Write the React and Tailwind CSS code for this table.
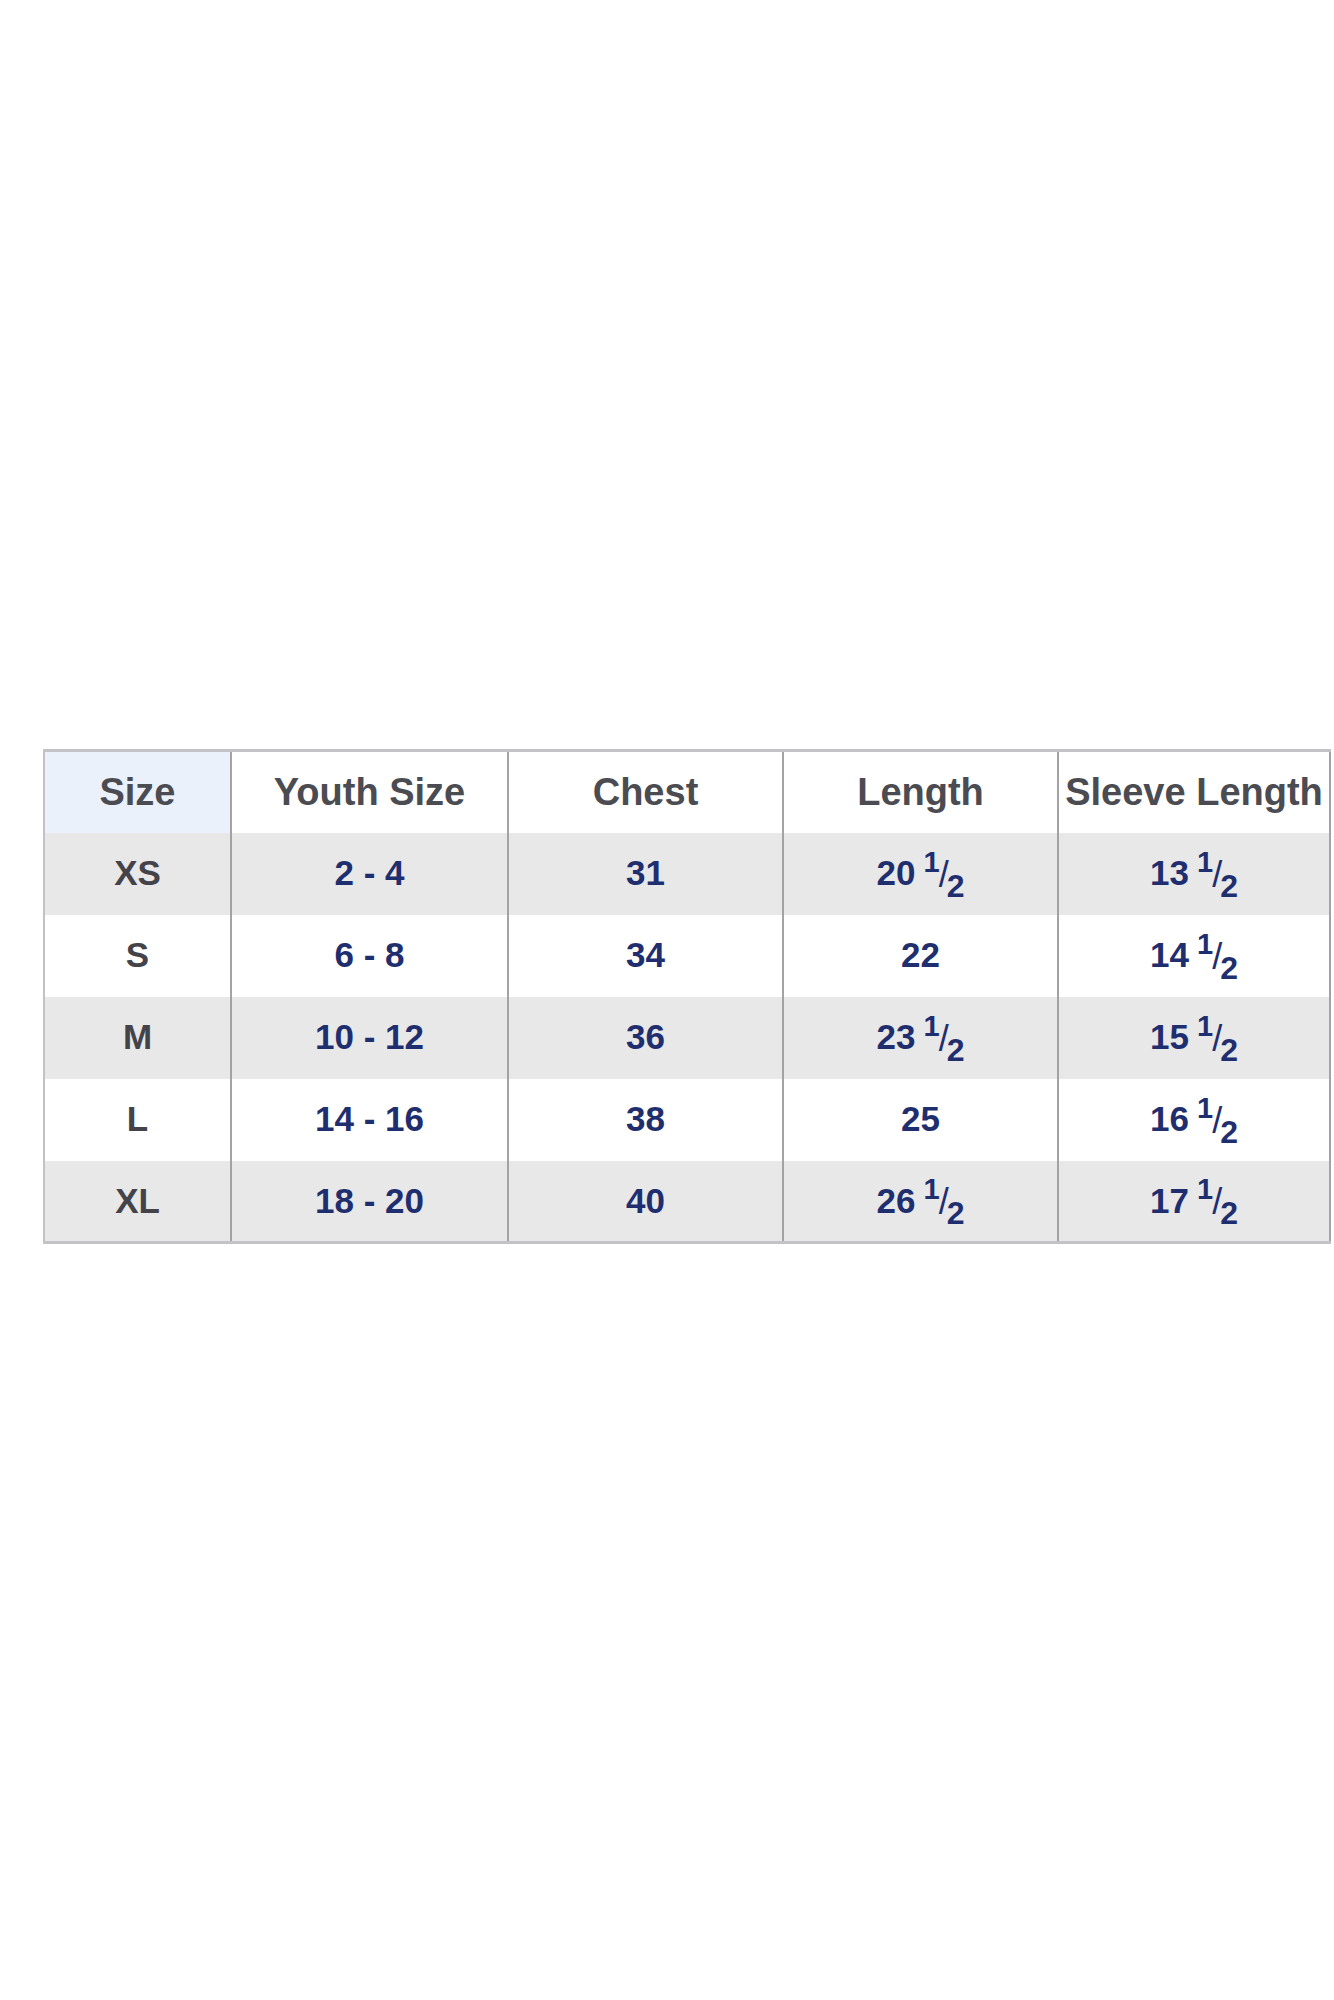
const rows = [
  { size: "XS", youth: "2 - 4", chest: "31", length: ["20", true], sleeve: ["13", true] },
  { size: "S", youth: "6 - 8", chest: "34", length: ["22", false], sleeve: ["14", true] },
  { size: "M", youth: "10 - 12", chest: "36", length: ["23", true], sleeve: ["15", true] },
  { size: "L", youth: "14 - 16", chest: "38", length: ["25", false], sleeve: ["16", true] },
  { size: "XL", youth: "18 - 20", chest: "40", length: ["26", true], sleeve: ["17", true] },
];

function Half({ whole, half }) {
  return (
    <span className="inline-flex items-center justify-center">
      <span>{whole}</span>
      {half && (
        <span className="ml-[8px] inline-flex items-center">
          <span className="relative top-[-11px] text-[29px]">1</span>
          <span className="relative top-[1px] ml-[-1px] text-[36px] font-normal">/</span>
          <span className="relative top-[12px] ml-[-2px] text-[32px]">2</span>
        </span>
      )}
    </span>
  );
}

export default function App() {
  const cell = "border-x-2 border-[#a3a3a6] text-center align-middle h-[82px] p-0";
  return (
    <div
      className="w-[1334px] h-[2000px] bg-white pt-[749px] pl-[43px]"
      style={{ fontFamily: '"Liberation Sans", Arial, sans-serif' }}
    >
      <table className="table-fixed border-collapse border-t-[3px] border-b-[3px] border-[#c3c3c6] text-[35px] font-bold">
        <colgroup>
          <col className="w-[187px]" />
          <col className="w-[277px]" />
          <col className="w-[275px]" />
          <col className="w-[275px]" />
          <col className="w-[272px]" />
        </colgroup>
        <thead>
          <tr className="text-[#4b4b52] text-[38px]">
            <th className={`${cell} bg-[#eaf1fb] border-l-[#c2c2c6]`}>Size</th>
            <th className={`${cell} bg-white`}>Youth Size</th>
            <th className={`${cell} bg-white`}>Chest</th>
            <th className={`${cell} bg-white`}>Length</th>
            <th className={`${cell} bg-white`}>Sleeve Length</th>
          </tr>
        </thead>
        <tbody>
          {rows.map((r, i) => (
            <tr key={r.size} className={i % 2 === 0 ? "bg-[#e8e8e9]" : "bg-white"}>
              <td className={`${cell} text-[#434349] border-l-[#c2c2c6]`}>{r.size}</td>
              <td className={`${cell} text-[#1f2e6e]`}>{r.youth}</td>
              <td className={`${cell} text-[#1f2e6e]`}>{r.chest}</td>
              <td className={`${cell} text-[#1f2e6e]`}>
                <Half whole={r.length[0]} half={r.length[1]} />
              </td>
              <td className={`${cell} text-[#1f2e6e]`}>
                <Half whole={r.sleeve[0]} half={r.sleeve[1]} />
              </td>
            </tr>
          ))}
        </tbody>
      </table>
    </div>
  );
}
